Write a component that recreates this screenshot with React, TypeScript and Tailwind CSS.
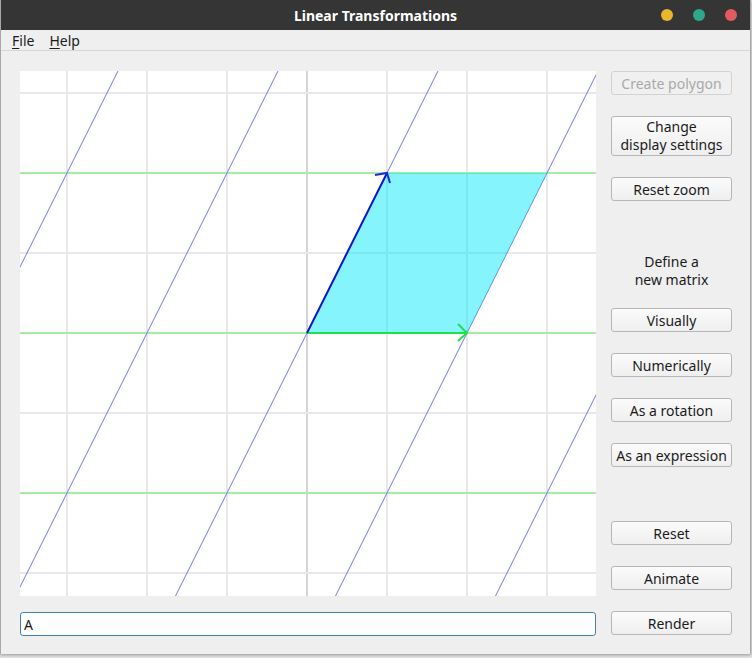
const FONT = { fontFamily: '"Noto Sans", "Open Sans", sans-serif' };

const ORIGIN_X = 287;
const ORIGIN_Y = 262;
const UNIT = 80;

function Plot() {
  const w = 576;
  const h = 525;
  const xs = [-3, -2, -1, 0, 1, 2, 3].map(k => ORIGIN_X + k * UNIT);
  const ys = [-3, -2, -1, 0, 1, 2, 3].map(k => ORIGIN_Y + k * UNIT);
  const slanted = [-2, -1, 0, 1, 2].map(k => ORIGIN_X + k * 160);
  const greens = [-1, 0, 1].map(k => ORIGIN_Y + k * 160);

  return (
    <svg width={w} height={h} className="block bg-white">
      {/* background grid */}
      {xs.map(x => (
        <line
          key={`v${x}`}
          x1={x}
          y1={0}
          x2={x}
          y2={h}
          stroke={x === ORIGIN_X ? "#d4d4d4" : "#e8e8e8"}
          strokeWidth={2}
        />
      ))}
      {ys.map(y => (
        <line
          key={`h${y}`}
          x1={0}
          y1={y}
          x2={w}
          y2={y}
          stroke={y === ORIGIN_Y ? "#d4d4d4" : "#e8e8e8"}
          strokeWidth={2}
        />
      ))}

      {/* transformed grid */}
      {greens.map(y => (
        <line
          key={`g${y}`}
          x1={0}
          y1={y}
          x2={w}
          y2={y}
          stroke="#a6eca6"
          strokeWidth={2}
        />
      ))}
      {slanted.map(x0 => (
        <line
          key={`s${x0}`}
          x1={x0 + (ORIGIN_Y + 20) / 2}
          y1={-20}
          x2={x0 + (ORIGIN_Y - (h + 20)) / 2}
          y2={h + 20}
          stroke="#7474f2"
          strokeWidth={1}
        />
      ))}

      {/* unit square image */}
      <polygon
        points={`${ORIGIN_X},${ORIGIN_Y} ${ORIGIN_X + 80},${ORIGIN_Y - 160} ${ORIGIN_X + 240},${ORIGIN_Y - 160} ${ORIGIN_X + 160},${ORIGIN_Y}`}
        fill="#00e8f8"
        fillOpacity={0.48}
      />

      {/* i-hat */}
      <line
        x1={ORIGIN_X}
        y1={ORIGIN_Y}
        x2={ORIGIN_X + 160}
        y2={ORIGIN_Y}
        stroke="#1fe04a"
        strokeWidth={2}
      />
      <polyline
        points={`${ORIGIN_X + 151},${ORIGIN_Y - 9} ${ORIGIN_X + 160},${ORIGIN_Y} ${ORIGIN_X + 151},${ORIGIN_Y + 8}`}
        fill="none"
        stroke="#1fe04a"
        strokeWidth={2}
      />

      {/* j-hat */}
      <line
        x1={ORIGIN_X}
        y1={ORIGIN_Y}
        x2={ORIGIN_X + 80}
        y2={ORIGIN_Y - 160}
        stroke="#1414cc"
        strokeWidth={2}
      />
      <polyline
        points={`${ORIGIN_X + 68},${ORIGIN_Y - 158} ${ORIGIN_X + 80},${ORIGIN_Y - 160} ${ORIGIN_X + 83},${ORIGIN_Y - 150}`}
        fill="none"
        stroke="#1a2ad8"
        strokeWidth={2}
      />
    </svg>
  );
}

function Btn({
  label,
  className = "",
  disabled = false,
}: {
  label: React.ReactNode;
  className?: string;
  disabled?: boolean;
}) {
  return (
    <button
      disabled={disabled}
      className={`w-[121px] h-[24px] shrink-0 rounded-[3px] border text-[14px] leading-[17px] flex flex-col items-center justify-center ${
        disabled
          ? "border-[#d2d2d2] bg-[#f0f0f0] text-[#a9a9a9]"
          : "border-[#b6b6b6] bg-gradient-to-b from-[#fbfbfb] to-[#efefef] text-[#1b1b1b]"
      } ${className}`}
    >
      {label}
    </button>
  );
}

export default function App() {
  return (
    <div className="w-[752px] h-[658px] bg-[#e4e4e4]" style={FONT}>
      <div className="w-[751px] h-[654px] bg-[#efefef] border-l border-r border-[#a8a8a8] shadow-[0_1px_3px_rgba(0,0,0,0.35)] flex flex-col">
        {/* title bar */}
        <div className="h-[30px] bg-[#353535] flex items-center relative shrink-0">
          <div className="flex-1 text-center text-white font-bold text-[14px]">
            Linear Transformations
          </div>
          <div className="absolute right-[13px] top-[9px] flex gap-[20px]">
            <span className="w-[12px] h-[12px] rounded-full bg-[#e9b62f]" />
            <span className="w-[12px] h-[12px] rounded-full bg-[#2ea88a]" />
            <span className="w-[12px] h-[12px] rounded-full bg-[#e35b61]" />
          </div>
        </div>

        {/* menu bar */}
        <div className="h-[21px] border-b border-[#d6d6d6] flex items-center gap-[15px] pl-[11px] text-[14px] text-[#1b1b1b] shrink-0">
          <span>
            <span className="underline underline-offset-2">F</span>ile
          </span>
          <span>
            <span className="underline underline-offset-2">H</span>elp
          </span>
        </div>

        {/* body */}
        <div className="flex pl-[19px] pt-[20px] gap-[15px]">
          <div className="flex flex-col gap-[16px]">
            <Plot />
            <div className="w-[576px] h-[24px] bg-white border border-[#3d7fb4] rounded-[3px] flex items-center px-[3px] text-[14px] text-[#1b1b1b]">
              A
            </div>
          </div>

          <div className="flex flex-col">
            <Btn label="Create polygon" disabled />
            <Btn
              label={
                <>
                  <span className="leading-[18px]">Change</span>
                  <span className="leading-[18px]">display settings</span>
                </>
              }
              className="mt-[21px] h-[40px]"
            />
            <Btn label="Reset zoom" className="mt-[21px]" />
            <div className="mt-[52px] h-[36px] flex flex-col items-center text-[14px] leading-[18px] text-[#1b1b1b]">
              <span>Define a</span>
              <span>new matrix</span>
            </div>
            <Btn label="Visually" className="mt-[19px]" />
            <Btn label="Numerically" className="mt-[21px]" />
            <Btn label="As a rotation" className="mt-[21px]" />
            <Btn label="As an expression" className="mt-[21px]" />
            <Btn label="Reset" className="mt-[54px]" />
            <Btn label="Animate" className="mt-[21px]" />
            <Btn label="Render" className="mt-[21px]" />
          </div>
        </div>
      </div>
    </div>
  );
}
